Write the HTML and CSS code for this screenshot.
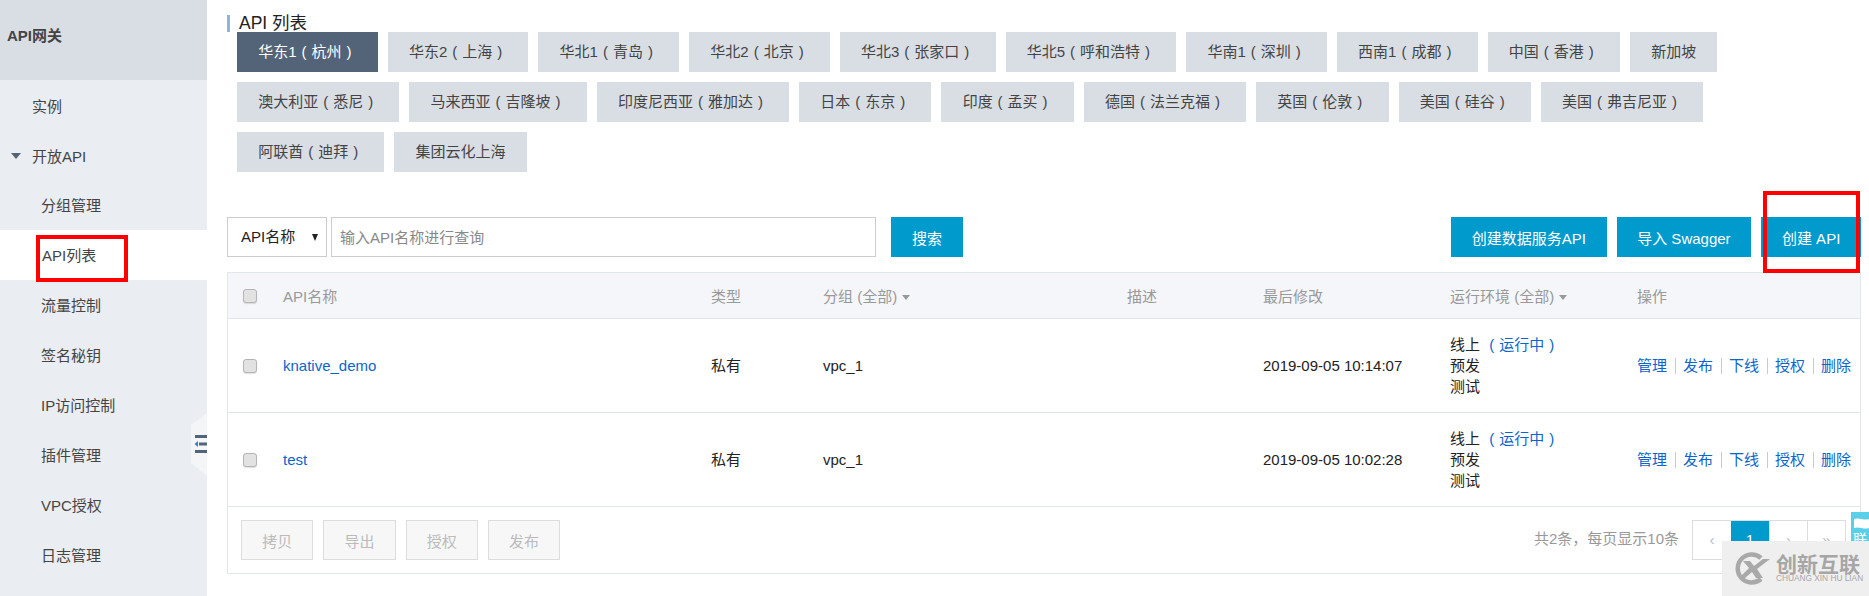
FILE: index.html
```html
<!DOCTYPE html>
<html lang="zh-CN">
<head>
<meta charset="utf-8">
<title>API 列表</title>
<link rel="stylesheet" href="styles.css">
</head>
<body>
<div class="page">
  <aside class="sidebar">
    <div class="side-head">API网关</div>
    <nav class="side-nav">
      <a class="side-item side-top">实例</a>
      <a class="side-item side-top"><i class="open-caret"></i>开放API</a>
      <a class="side-item side-sub">分组管理</a>
      <a class="side-item side-sub side-active">API列表</a>
      <a class="side-item side-sub">流量控制</a>
      <a class="side-item side-sub">签名秘钥</a>
      <a class="side-item side-sub">IP访问控制</a>
      <a class="side-item side-sub">插件管理</a>
      <a class="side-item side-sub">VPC授权</a>
      <a class="side-item side-sub">日志管理</a>
    </nav>
    <svg class="collapse" width="16" height="63" viewBox="0 0 16 63">
      <path d="M16 0 L0 12 V50 L16 63 Z" fill="#f4f5f7"/>
      <path d="M4 22 H16 V25 H4 Z M4 37 H16 V40 H4 Z M8 29.5 H16 V32.5 H8 Z" fill="#546478"/>
      <path d="M7 28 L3.5 31 L7 34 Z" fill="#3f7fc4"/>
    </svg>
  </aside>

  <main class="main">
    <h1 class="title">API 列表</h1>
    <div class="regions">
      <div class="region-row">
        <a class="region region-on">华东1 ( 杭州 )&nbsp;</a>
        <a class="region">华东2 ( 上海 )&nbsp;</a>
        <a class="region">华北1 ( 青岛 )&nbsp;</a>
        <a class="region">华北2 ( 北京 )&nbsp;</a>
        <a class="region">华北3 ( 张家口 )&nbsp;</a>
        <a class="region">华北5 ( 呼和浩特 )&nbsp;</a>
        <a class="region">华南1 ( 深圳 )&nbsp;</a>
        <a class="region">西南1 ( 成都 )&nbsp;</a>
        <a class="region">中国 ( 香港 )&nbsp;</a>
        <a class="region">新加坡</a>
      </div>
      <div class="region-row">
        <a class="region">澳大利亚 ( 悉尼 )&nbsp;</a>
        <a class="region">马来西亚 ( 吉隆坡 )&nbsp;</a>
        <a class="region">印度尼西亚 ( 雅加达 )&nbsp;</a>
        <a class="region">日本 ( 东京 )&nbsp;</a>
        <a class="region">印度 ( 孟买 )&nbsp;</a>
        <a class="region">德国 ( 法兰克福 )&nbsp;</a>
        <a class="region">英国 ( 伦敦 )&nbsp;</a>
        <a class="region">美国 ( 硅谷 )&nbsp;</a>
        <a class="region">美国 ( 弗吉尼亚 )&nbsp;</a>
      </div>
      <div class="region-row">
        <a class="region">阿联酋 ( 迪拜 )&nbsp;</a>
        <a class="region">集团云化上海</a>
      </div>
    </div>

    <div class="toolbar">
      <div class="select">API名称<i class="select-caret"></i></div>
      <input class="search-input" type="text" placeholder="输入API名称进行查询">
      <button class="btn btn-search">搜索</button>
      <div class="toolbar-right">
        <button class="btn">创建数据服务API</button>
        <button class="btn">导入 Swagger</button>
        <button class="btn">创建 API</button>
      </div>
    </div>

    <section class="panel">
      <table class="grid">
        <colgroup>
          <col class="c-check"><col class="c-name"><col class="c-type"><col class="c-group">
          <col class="c-desc"><col class="c-time"><col class="c-env"><col class="c-ops">
        </colgroup>
        <thead>
          <tr>
            <th><span class="check"></span></th>
            <th>API名称</th>
            <th>类型</th>
            <th>分组 (全部)<i class="th-caret"></i></th>
            <th>描述</th>
            <th>最后修改</th>
            <th>运行环境 (全部)<i class="th-caret"></i></th>
            <th>操作</th>
          </tr>
        </thead>
        <tbody>
          <tr>
            <td><span class="check"></span></td>
            <td><a class="link">knative_demo</a></td>
            <td>私有</td>
            <td>vpc_1</td>
            <td></td>
            <td>2019-09-05 10:14:07</td>
            <td>线上 <a class="link run">&nbsp;( 运行中 )</a><br>预发<br>测试</td>
            <td><div class="ops"><a class="link">管理</a><i class="sep"></i><a class="link">发布</a><i class="sep"></i><a class="link">下线</a><i class="sep"></i><a class="link">授权</a><i class="sep"></i><a class="link">删除</a></div></td>
          </tr>
          <tr>
            <td><span class="check"></span></td>
            <td><a class="link">test</a></td>
            <td>私有</td>
            <td>vpc_1</td>
            <td></td>
            <td>2019-09-05 10:02:28</td>
            <td>线上 <a class="link run">&nbsp;( 运行中 )</a><br>预发<br>测试</td>
            <td><div class="ops"><a class="link">管理</a><i class="sep"></i><a class="link">发布</a><i class="sep"></i><a class="link">下线</a><i class="sep"></i><a class="link">授权</a><i class="sep"></i><a class="link">删除</a></div></td>
          </tr>
        </tbody>
      </table>
      <div class="panel-foot">
        <div class="bulk">
          <button class="btn-off">拷贝</button>
          <button class="btn-off">导出</button>
          <button class="btn-off">授权</button>
          <button class="btn-off">发布</button>
        </div>
        <div class="paging">
          <span class="total">共2条，每页显示10条</span>
          <div class="pager">
            <a class="pg">‹</a><a class="pg pg-on">1</a><a class="pg">›</a><a class="pg">»</a>
          </div>
        </div>
      </div>
    </section>
  </main>

  <div class="mark mark-nav"></div>
  <div class="mark mark-btn"></div>

  <div class="sidetab">
    <svg width="18" height="16" viewBox="0 0 18 16"><path d="M3 3 C8 1 13 5 18 3 V12 C13 14 8 10 3 12 Z" fill="#fff"/></svg>
    <span>联</span>
  </div>

  <div class="watermark">
    <svg class="wm-logo" width="36" height="33" viewBox="0 0 36 33">
      <path d="M27 6 A14 14 0 1 0 27 27" fill="none" stroke="#a9a9a9" stroke-width="4.5"/>
      <path d="M9 9 H16 L20 14 L29 7 H36 L23 17 L29 26 H22 L18 20 L11 26 H5 L15 16 Z" fill="#a9a9a9"/>
    </svg>
    <div class="wm-text">
      <span class="wm-cn">创新互联</span>
      <span class="wm-en">CHUANG XIN HU LIAN</span>
    </div>
  </div>
</div>
</body>
</html>
```
FILE: styles.css
```css
* { box-sizing: border-box; }
html, body { margin: 0; padding: 0; }
body {
  font-family: "Liberation Sans", "Noto Sans CJK SC", sans-serif;
  font-size: 15px;
  color: #333;
  background: #fff;
}
.page {
  position: relative;
  display: flex;
  width: 1869px;
  height: 596px;
  overflow: hidden;
}

/* sidebar */
.sidebar {
  position: relative;
  flex: 0 0 207px;
  background: #eaedf1;
}
.side-head {
  height: 80px;
  padding: 26px 0 0 7px;
  line-height: 20px;
  font-weight: 700;
  color: #444;
  background: #d9dee4;
}
.side-nav { display: flex; flex-direction: column; }
.side-item {
  position: relative;
  height: 50px;
  padding-left: 32px;
  line-height: 52px;
  color: #444;
}
.side-top { line-height: 54px; }
.side-sub { padding-left: 41px; }
.side-active { background: #fff; line-height: 52px; padding-left: 42px; }
.open-caret {
  position: absolute;
  left: 11px;
  top: 23px;
  border-left: 5px solid transparent;
  border-right: 5px solid transparent;
  border-top: 6px solid #546478;
}
.collapse { position: absolute; right: 0; top: 413px; display: block; }

/* main */
.main { flex: 1; min-width: 0; padding: 0 8px 0 20px; }
.title {
  margin: 0;
  height: 32px;
  padding: 15px 0 0 12px;
  position: relative;
  font-size: 17.5px;
  font-weight: 400;
  line-height: 17px;
  color: #222;
}
.title::before {
  content: "";
  position: absolute;
  left: 0;
  top: 15px;
  width: 3px;
  height: 17px;
  background: #88b7e0;
}
.regions {
  display: flex;
  flex-direction: column;
  gap: 10px;
  margin-left: 10px;
}
.region-row { display: flex; gap: 10px; }
.region {
  height: 40px;
  padding: 0 21.2px;
  line-height: 40px;
  white-space: nowrap;
  word-spacing: .83px;
  color: #444;
  background: #d9dee4;
}
.region-on { color: #fff; background: #546478; }

/* toolbar */
.toolbar { display: flex; margin-top: 45px; height: 40px; }
.select {
  position: relative;
  width: 100px;
  height: 40px;
  padding-left: 13px;
  line-height: 38px;
  color: #222;
  border: 1px solid #ccc;
  background: #fff;
}
.select-caret {
  position: absolute;
  right: 8px;
  top: 16px;
  border-left: 3.5px solid transparent;
  border-right: 3.5px solid transparent;
  border-top: 7px solid #222;
}
.search-input {
  width: 545px;
  height: 40px;
  margin-left: 4px;
  padding: 0 8px;
  font: inherit;
  color: #333;
  border: 1px solid #ccc;
  border-radius: 0;
  outline: none;
}
.search-input::placeholder { color: #888; opacity: 1; }
.btn {
  height: 40px;
  padding: 0 20.7px;
  font: inherit;
  color: #fff;
  background: #009acd;
  border: 0;
  white-space: nowrap;
}
.btn-search { width: 72px; margin-left: 15px; padding: 0; }
.toolbar-right { display: flex; gap: 10px; margin-left: auto; }

/* table */
.panel { margin-top: 15px; border: 1px solid #e1e6eb; }
.grid { width: 100%; border-collapse: separate; border-spacing: 0; table-layout: fixed; }
.c-check { width: 55px; }
.c-name { width: 428px; }
.c-type { width: 112px; }
.c-group { width: 304px; }
.c-desc { width: 136px; }
.c-time { width: 187px; }
.c-env { width: 187px; }
.grid th {
  height: 46px;
  padding: 0;
  text-align: left;
  font-weight: 400;
  color: #999;
  background: #f4f6f9;
  border-bottom: 1px solid #e1e6eb;
}
.grid td {
  height: 94px;
  padding: 0;
  line-height: 21px;
  color: #222;
  border-bottom: 1px solid #e1e6eb;
}
.th-caret {
  display: inline-block;
  margin-left: 5px;
  vertical-align: 2px;
  border-left: 4.5px solid transparent;
  border-right: 4.5px solid transparent;
  border-top: 5px solid #999;
}
.check {
  display: block;
  width: 14px;
  height: 14px;
  margin-left: 15px;
  background: #e2e2e2;
  border: 1px solid #b5b5b5;
  border-radius: 3px;
  box-shadow: 0 1px 1px rgba(0, 0, 0, .12);
}
.link { color: #0a66cc; }
.run { word-spacing: .83px; }
.ops { display: flex; align-items: center; }
.sep { width: 1px; height: 16px; margin: 0 7.5px; background: #c8ccd0; }

/* footer */
.panel-foot {
  display: flex;
  justify-content: space-between;
  height: 66px;
  padding: 13px 14px 0 13px;
}
.bulk { display: flex; gap: 10px; }
.btn-off {
  width: 72.3px;
  height: 40px;
  padding: 0;
  font: inherit;
  color: #bbb;
  background: #f7f7f7;
  border: 1px solid #ddd;
}
.paging { display: flex; align-items: flex-start; }
.total {
  margin-right: 13px;
  line-height: 38px;
  color: #999;
  font-family: "Liberation Sans", "Noto Sans CJK TC", sans-serif;
}
.pager { display: flex; border: 1px solid #ddd; height: 40px; }
.pg {
  width: 38px;
  line-height: 38px;
  text-align: center;
  color: #bbb;
  border-left: 1px solid #ddd;
}
.pg:first-child { border-left: 0; }
.pg-on { color: #fff; background: #009acd; border-left: 0; }

/* screenshot annotations */
.mark { position: absolute; border: 4px solid #f00; }
.mark-nav { left: 36px; top: 235px; width: 92px; height: 47px; }
.mark-btn { left: 1763px; top: 191px; width: 97px; height: 82px; }

.sidetab {
  position: absolute;
  left: 1851px;
  top: 512px;
  width: 18px;
  height: 40px;
  padding-top: 4px;
  overflow: hidden;
  text-align: center;
  font-size: 14px;
  line-height: 14px;
  color: #fff;
  background: #5ad0e8;
}
.sidetab svg { display: block; }

.watermark {
  position: absolute;
  left: 1722px;
  top: 541px;
  display: flex;
  gap: 6px;
  width: 147px;
  height: 55px;
  padding: 11px 0 0 12px;
  background: #efefef;
}
.wm-logo { display: block; flex: none; }
.wm-text { display: flex; flex-direction: column; padding-top: 2px; color: #a6a6a6; }
.wm-cn { font-size: 21px; line-height: 22px; font-weight: 700; white-space: nowrap; }
.wm-en { margin-top: -2px; font-size: 8.3px; line-height: 9px; white-space: nowrap; }
```
